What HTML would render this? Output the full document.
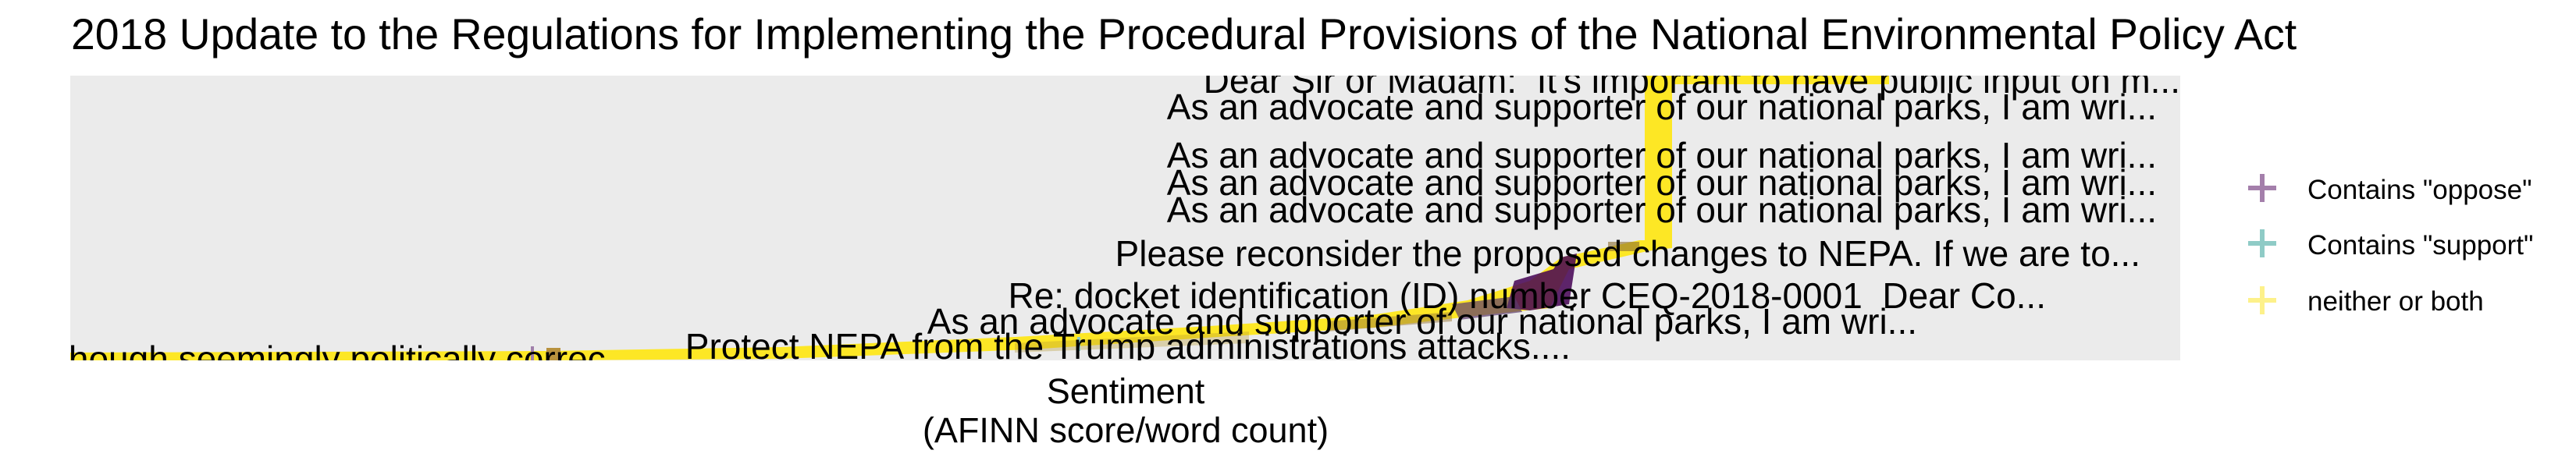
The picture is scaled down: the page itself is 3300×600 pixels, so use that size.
<!DOCTYPE html>
<html><head><meta charset="utf-8"><style>
html,body{margin:0;padding:0;background:#fff;}
svg{display:block;}
text{font-family:"Liberation Sans",Arial,sans-serif;fill:#000;white-space:pre;}
</style></head><body>
<svg width="3300" height="600" viewBox="0 0 3300 600" xmlns="http://www.w3.org/2000/svg" xml:space="preserve">
<defs><clipPath id="p"><rect x="90" y="97" width="2703" height="365"/></clipPath></defs>
<text x="91" y="63" font-size="55.4">2018 Update to the Regulations for Implementing the Procedural Provisions of the National Environmental Policy Act</text>
<rect x="90" y="97" width="2703" height="365" fill="#EBEBEB"/>
<g clip-path="url(#p)">
  <polygon points="90,452 700,450 1000,445 1300,432 1550,418 1750,405 1880,385 1960,360 2000,330 2100,308 2107,308 2107,97 2420,97 2420,108 2142,108 2142,318 2110,322 2010,345 1985,395 1890,405 1760,420 1560,432 1320,448 1000,460 700,462 90,462" fill="#FDE725"/>
  <polygon points="1940,360 1990,345 2000,330 2020,325 2010,390 1960,398 1930,395" fill="#440154" opacity="0.85"/>
  <polygon points="1860,390 1940,380 1950,400 1870,410" fill="#5B3A6E" opacity="0.7"/>
  <polygon points="1700,412 1860,400 1860,412 1700,425" fill="#9C7A3A" opacity="0.5"/>
  <polygon points="1300,440 1600,425 1600,440 1300,452" fill="#B89A30" opacity="0.35"/>
  <rect x="2060" y="310" width="40" height="12" fill="#8C6E2F" opacity="0.6"/>
  <rect x="680" y="444" width="4" height="18" fill="#A07FAA"/>
  <rect x="700" y="446" width="18" height="16" fill="#B8923E"/>
  <rect x="1380" y="432" width="4" height="18" fill="#8FCBC6"/>
  <text x="2793" y="119" font-size="46" text-anchor="end">Dear Sir or Madam:  It's important to have public input on m...</text>
  <text x="2763" y="153" font-size="46" text-anchor="end">As an advocate and supporter of our national parks, I am wri...</text>
  <text x="2763" y="215" font-size="46" text-anchor="end">As an advocate and supporter of our national parks, I am wri...</text>
  <text x="2763" y="250" font-size="46" text-anchor="end">As an advocate and supporter of our national parks, I am wri...</text>
  <text x="2763" y="285" font-size="46" text-anchor="end">As an advocate and supporter of our national parks, I am wri...</text>
  <text x="2742" y="341" font-size="46" text-anchor="end">Please reconsider the proposed changes to NEPA. If we are to...</text>
  <text x="2621" y="395" font-size="46" text-anchor="end">Re: docket identification (ID) number CEQ-2018-0001  Dear Co...</text>
  <text x="2456" y="428" font-size="46" text-anchor="end">As an advocate and supporter of our national parks, I am wri...</text>
  <text x="2012" y="460" font-size="46" text-anchor="end">Protect NEPA from the Trump administrations attacks....</text>
  <text x="814" y="476" font-size="46" text-anchor="end">although seemingly politically correc...</text>
</g>
<text x="1442" y="517" font-size="45" text-anchor="middle">Sentiment</text>
<text x="1442" y="567" font-size="45" text-anchor="middle">(AFINN score/word count)</text>
<g stroke-width="6">
  <path d="M2880 241H2916M2898 223V259" stroke="#A47FAB"/>
  <path d="M2880 312H2916M2898 294V330" stroke="#8FCBC6"/>
  <path d="M2880 385H2916M2898 367V403" stroke="#FDF18A"/>
</g>
<text x="2956" y="255" font-size="35">Contains "oppose"</text>
<text x="2956" y="326" font-size="35">Contains "support"</text>
<text x="2956" y="398" font-size="35">neither or both</text>
</svg>
</body></html>
